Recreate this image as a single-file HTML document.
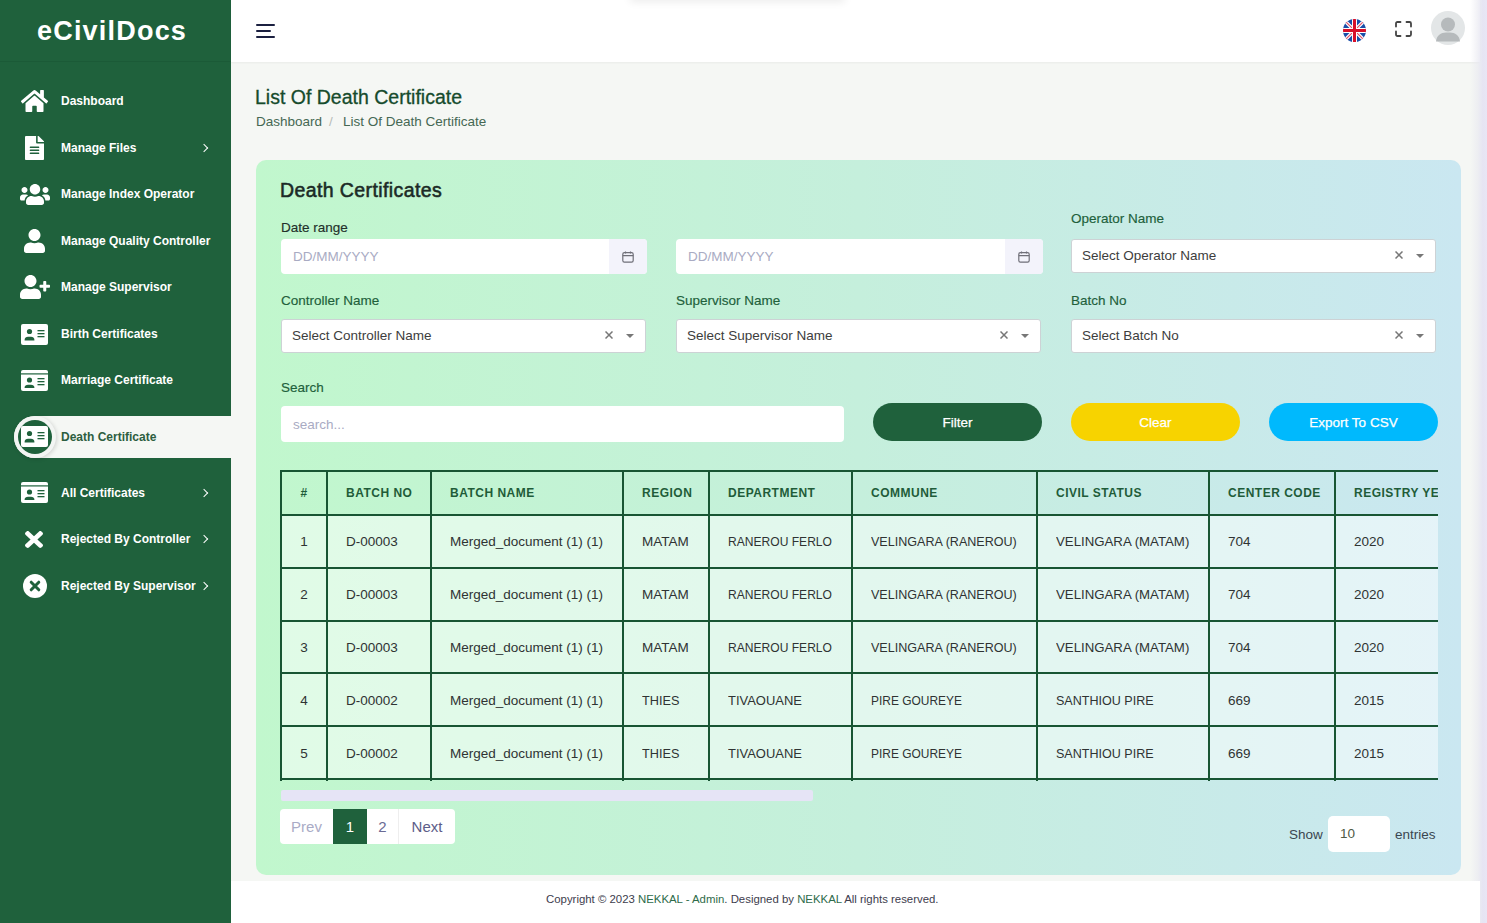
<!DOCTYPE html>
<html><head><meta charset="utf-8">
<style>
*{box-sizing:border-box;margin:0;padding:0}
html,body{width:1487px;height:923px;overflow:hidden;font-family:"Liberation Sans",sans-serif;background:#f5f7f4}
.sb{position:absolute;left:0;top:0;width:231px;height:923px;background:#1f613c}
.logo{position:absolute;left:0;top:0;width:231px;height:62px;border-bottom:1px solid #1b5a37;color:#fff;font-weight:bold;font-size:27px;letter-spacing:1.2px;text-align:left;padding-left:37px;line-height:62px}
.mi{position:absolute;left:0;width:231px;height:40px;color:#fff;font-size:13px;font-weight:bold}
.mi .ic{position:absolute;left:20px;top:0;width:30px;height:40px}
.mi .tx{position:absolute;left:61px;top:0;line-height:40px}
.mi .ar{position:absolute;left:201px;top:0;line-height:40px;font-size:13px}
.ico{position:absolute;display:block}
.mt{position:absolute;left:61px;height:40px;line-height:40px;color:#fff;font-size:12px;font-weight:bold;white-space:nowrap}
.mt.act{color:#2d5e40}
.chev{position:absolute;left:201px;margin-top:1px;width:6px;height:6px;border-right:1.6px solid #fff;border-top:1.6px solid #fff;transform:rotate(45deg)}
.active{position:absolute;left:14px;top:416px;width:217px;height:42px;background:#f5f7f4;border-radius:21px 0 0 21px}
.acirc{position:absolute;left:14px;top:416px;width:42px;height:42px;border-radius:50%;background:#f3f5f3;box-shadow:1px 1px 4px rgba(0,0,0,.15)}
.acirc:after{content:"";position:absolute;left:4px;top:4px;width:34px;height:34px;border-radius:50%;background:#1f613c}
.hb{position:absolute;left:25px;height:2px;background:#1b2040;border-radius:1px}
.lbl{position:absolute;font-size:13.5px;color:#21603b;white-space:nowrap;-webkit-text-stroke:.15px currentColor}
.inp{position:absolute;height:35px;background:#fff;border-radius:4px}
.ph{position:absolute;left:12px;top:0;line-height:35px;font-size:13.5px;color:#a9abc3;white-space:nowrap}
.addon{position:absolute;right:0;top:0;width:38px;height:35px;background:#f3f3fb;border-radius:0 4px 4px 0}
.sel{position:absolute;height:34px;background:#fff;border:1px solid #cdd2d5;border-radius:3px}
.sel .v{position:absolute;left:10px;top:0;line-height:32px;font-size:13.5px;color:#3d3d3d;white-space:nowrap}
.sel .x{position:absolute;right:32px;top:11px;width:8px;height:8px}
.sel .dd{position:absolute;right:11px;top:14px;width:0;height:0;border-left:4.5px solid transparent;border-right:4.5px solid transparent;border-top:4.5px solid #777}
.btn{position:absolute;top:403px;width:169px;height:38px;border-radius:19px;color:#fff;font-size:13.5px;text-align:center;line-height:39px;-webkit-text-stroke:.25px #fff}
.tbl{position:absolute;left:280px;top:470px;width:1158px;height:311px;overflow:hidden}
.rowbg{position:absolute;left:0;width:1158px;background:rgba(255,255,255,.5)}
.vl{position:absolute;top:0;width:2px;height:311px;background:#185533}
.hl{position:absolute;left:0;width:1300px;height:2px;background:#185533}
.th{position:absolute;top:2px;line-height:43px;font-size:12px;font-weight:bold;letter-spacing:.5px;color:#1f5c39;white-space:nowrap}
.td{position:absolute;line-height:53px;font-size:13.5px;color:#2f3333;white-space:nowrap}
.sbar{position:absolute;left:281px;top:790px;width:532px;height:10.5px;background:#e6e4f6;border-radius:2px}
.pag{position:absolute;left:280px;top:809px;width:175px;height:35px;background:#fff;border-radius:4px;overflow:hidden}
.pg{position:absolute;top:0;height:35px;line-height:35px;text-align:center;font-size:15px}
.pg.act{background:#1f613c;color:#fff}
.shw{position:absolute;top:827px;font-size:13.5px;color:#3a4650;white-space:nowrap}
.hdr{position:absolute;left:231px;top:0;width:1249px;height:62px;background:#fff;box-shadow:0 1px 2px rgba(0,0,0,.05)}
.rstrip{position:absolute;left:1470px;top:0;width:17px;height:923px;background:linear-gradient(90deg,rgba(235,235,245,0) 0%,rgba(232,232,240,.6) 45%,#e6e5f3 75%,#e8e6f5 100%)}
.tsh{position:absolute;left:630px;top:-10px;width:215px;height:10px;box-shadow:0 2px 8px rgba(0,0,0,.08)}
.title{position:absolute;left:255px;top:86px;font-size:19.5px;color:#164b2c;white-space:nowrap;-webkit-text-stroke:.3px #164b2c}
.bc{position:absolute;top:114px;font-size:13.5px;color:#456853;white-space:nowrap}
.h2{position:absolute;left:280px;top:178.5px;font-size:19.5px;letter-spacing:.4px;color:#1b2a26;white-space:nowrap;-webkit-text-stroke:.55px #1b2a26}
.card{position:absolute;left:256px;top:160px;width:1205px;height:715px;border-radius:10px;background:linear-gradient(90deg,#c1f7cd 0%,#c5efdc 50%,#cae7f1 100%)}
.ft{position:absolute;left:231px;top:881px;width:1249px;height:42px;background:#fff}
.ftt{position:absolute;left:546px;top:893px;font-size:11.4px;color:#3d3d4d;white-space:nowrap}
.ftt span{color:#2e6b4a}
</style></head><body>
<div class="sb">
  <div class="logo">eCivilDocs</div>
  <svg class="ico" style="left:21px;top:90px;width:27px;height:22px" viewBox="0 0 576 480" preserveAspectRatio="none"><path fill="#fff" d="M280.37 148.26L96 300.11V464a16 16 0 0 0 16 16l112.06-.29a16 16 0 0 0 15.92-16V368a16 16 0 0 1 16-16h64a16 16 0 0 1 16 16v95.64a16 16 0 0 0 16 16.050L464 480a16 16 0 0 0 16-16V300L295.670 148.26a12.19 12.19 0 0 0-15.3 0zM571.6 251.47L488 182.56V44.05a12 12 0 0 0-12-12h-56a12 12 0 0 0-12 12v72.61L318.47 43a48 48 0 0 0-61 0L4.34 251.47a12 12 0 0 0-1.6 16.9l25.5 31A12 12 0 0 0 45.15 301l235.22-193.74a12.19 12.19 0 0 1 15.3 0L530.9 301a12 12 0 0 0 16.9-1.6l25.5-31a12 12 0 0 0-1.7-16.93z" transform="translate(0,-32) scale(1,1.0667)"/></svg>
  <div class="mt" style="top:81px">Dashboard</div>

  <svg class="ico" style="left:25px;top:136px;width:19px;height:24px" viewBox="0 0 384 512" preserveAspectRatio="none"><path fill="#fff" d="M224 136V0H24C10.7 0 0 10.7 0 24v464c0 13.3 10.7 24 24 24h336c13.3 0 24-10.7 24-24V160H248c-13.2 0-24-10.8-24-24zm64 236c0 6.6-5.4 12-12 12H108c-6.6 0-12-5.4-12-12v-8c0-6.6 5.4-12 12-12h168c6.6 0 12 5.4 12 12v8zm0-64c0 6.6-5.4 12-12 12H108c-6.6 0-12-5.4-12-12v-8c0-6.6 5.4-12 12-12h168c6.6 0 12 5.4 12 12v8zm0-72v8c0 6.6-5.4 12-12 12H108c-6.6 0-12-5.4-12-12v-8c0-6.6 5.4-12 12-12h168c6.6 0 12 5.4 12 12zm96-114.1v6.1H256V0h6.1c6.4 0 12.5 2.5 17 7l97.9 98c4.5 4.5 7 10.6 7 16.9z"/></svg>
  <div class="mt" style="top:127.5px">Manage Files</div>
  <div class="chev" style="top:144px"></div>

  <svg class="ico" style="left:20px;top:184px;width:30px;height:21px" viewBox="0 32 640 448" preserveAspectRatio="none"><path fill="#fff" d="M96 224c35.3 0 64-28.7 64-64s-28.7-64-64-64-64 28.7-64 64 28.7 64 64 64zm448 0c35.3 0 64-28.700 64-64s-28.7-64-64-64-64 28.7-64 64 28.7 64 64 64zm32 32h-64c-17.6 0-33.5 7.1-45.1 18.6 40.3 22.1 68.9 62 75.1 109.4h66c17.7 0 32-14.3 32-32v-32c0-35.3-28.7-64-64-64zm-256 0c61.9 0 112-50.1 112-112S381.9 32 320 32 208 82.1 208 144s50.1 112 112 112zm76.8 32h-8.3c-20.8 10-43.9 16-68.5 16s-47.6-6-68.5-16h-8.3C179.6 288 128 339.6 128 403.2V432c0 26.5 21.5 48 48 48h288c26.5 0 48-21.5 48-48v-28.8c0-63.6-51.6-115.2-115.2-115.2zm-223.7-13.4C161.5 263.1 145.6 256 128 256H64c-35.3 0-64 28.7-64 64v32c0 17.7 14.3 32 32 32h65.9c6.3-47.4 34.9-87.3 75.2-109.4z"/></svg>
  <div class="mt" style="top:174px">Manage Index Operator</div>

  <svg class="ico" style="left:24px;top:229px;width:21px;height:24px" viewBox="0 0 448 512" preserveAspectRatio="none"><path fill="#fff" d="M224 256c70.7 0 128-57.3 128-128S294.7 0 224 0 96 57.3 96 128s57.3 128 128 128zm89.6 32h-16.7c-22.2 10.2-46.9 16-72.9 16s-50.6-5.8-72.9-16h-16.7C60.2 288 0 348.2 0 422.4V464c0 26.5 21.5 48 48 48h352c26.5 0 48-21.5 48-48v-41.6c0-74.2-60.2-134.4-134.4-134.4z"/></svg>
  <div class="mt" style="top:220.5px">Manage Quality Controller</div>

  <svg class="ico" style="left:20px;top:275px;width:30px;height:24px" viewBox="0 0 640 512" preserveAspectRatio="none"><path fill="#fff" d="M624 208h-64v-64c0-8.8-7.2-16-16-16h-32c-8.8 0-16 7.2-16 16v64h-64c-8.8 0-16 7.2-16 16v32c0 8.8 7.2 16 16 16h64v64c0 8.8 7.2 16 16 16h32c8.8 0 16-7.2 16-16v-64h64c8.8 0 16-7.2 16-16v-32c0-8.8-7.2-16-16-16zm-400 48c70.7 0 128-57.3 128-128S294.7 0 224 0 96 57.3 96 128s57.3 128 128 128zm89.6 32h-16.7c-22.2 10.2-46.9 16-72.9 16s-50.6-5.8-72.9-16h-16.7C60.2 288 0 348.2 0 422.4V464c0 26.5 21.5 48 48 48h352c26.5 0 48-21.5 48-48v-41.6c0-74.2-60.2-134.4-134.4-134.4z"/></svg>
  <div class="mt" style="top:267px">Manage Supervisor</div>

  <svg class="ico" style="left:21px;top:324px;width:27px;height:21px" viewBox="0 0 27 21"><rect x="0" y="0" width="27" height="21" rx="2" fill="#fff"/><circle cx="8.5" cy="7.5" r="2.6" fill="#1f613c"/><path d="M3.6 15.8c0-2 1.6-3 3.4-3h3c1.8 0 3.4 1 3.4 3v0.6H3.6z" fill="#1f613c"/><rect x="16.5" y="6" width="7" height="1.3" fill="#1f613c"/><rect x="16.5" y="9" width="7" height="1.3" fill="#1f613c"/><rect x="16.5" y="12" width="7" height="1.3" fill="#1f613c"/></svg>
  <div class="mt" style="top:313.5px">Birth Certificates</div>

  <svg class="ico" style="left:21px;top:370px;width:27px;height:21px" viewBox="0 0 27 21"><rect x="0" y="0" width="27" height="21" rx="2" fill="#fff"/><rect x="0" y="3.3" width="27" height="1.2" fill="#1f613c"/><circle cx="8.5" cy="10" r="2.6" fill="#1f613c"/><path d="M3.6 17.5c0-1.8 1.6-2.7 3.4-2.7h3c1.8 0 3.4 0.9 3.4 2.7v0.5H3.6z" fill="#1f613c"/><rect x="16.5" y="8" width="7" height="1.3" fill="#1f613c"/><rect x="16.5" y="11" width="7" height="1.3" fill="#1f613c"/><rect x="16.5" y="14" width="7" height="1.3" fill="#1f613c"/></svg>
  <div class="mt" style="top:360px">Marriage Certificate</div>

  <div class="active"></div>
  <div class="acirc"></div>
  <svg class="ico" style="left:21px;top:426px;width:27px;height:21px" viewBox="0 0 27 21"><rect x="0" y="0" width="27" height="21" rx="2" fill="#fff"/><circle cx="8.5" cy="7.5" r="2.6" fill="#1f613c"/><path d="M3.6 15.8c0-2 1.6-3 3.4-3h3c1.8 0 3.4 1 3.4 3v0.6H3.6z" fill="#1f613c"/><rect x="16.5" y="6" width="7" height="1.3" fill="#1f613c"/><rect x="16.5" y="9" width="7" height="1.3" fill="#1f613c"/><rect x="16.5" y="12" width="7" height="1.3" fill="#1f613c"/></svg>
  <div class="mt act" style="top:417px">Death Certificate</div>

  <svg class="ico" style="left:21px;top:482px;width:27px;height:21px" viewBox="0 0 27 21"><rect x="0" y="0" width="27" height="21" rx="2" fill="#fff"/><rect x="0" y="3.3" width="27" height="1.2" fill="#1f613c"/><circle cx="8.5" cy="10" r="2.6" fill="#1f613c"/><path d="M3.6 17.5c0-1.8 1.6-2.7 3.4-2.7h3c1.8 0 3.4 0.9 3.4 2.7v0.5H3.6z" fill="#1f613c"/><rect x="16.5" y="8" width="7" height="1.3" fill="#1f613c"/><rect x="16.5" y="11" width="7" height="1.3" fill="#1f613c"/><rect x="16.5" y="14" width="7" height="1.3" fill="#1f613c"/></svg>
  <div class="mt" style="top:473px">All Certificates</div>
  <div class="chev" style="top:489px"></div>

  <svg class="ico" style="left:25px;top:531px;width:18px;height:17px" viewBox="0 80 352 352" preserveAspectRatio="none"><path fill="#fff" d="M242.72 256l100.07-100.07c12.28-12.28 12.28-32.19 0-44.48l-22.24-22.24c-12.28-12.28-32.19-12.28-44.48 0L176 189.28 75.93 89.21c-12.280-12.28-32.19-12.28-44.48 0L9.21 111.45c-12.28 12.28-12.28 32.19 0 44.48L109.28 256 9.21 356.07c-12.28 12.28-12.28 32.19 0 44.48l22.24 22.24c12.28 12.28 32.2 12.28 44.48 0L176 322.72l100.07 100.07c12.28 12.28 32.2 12.28 44.48 0l22.24-22.24c12.28-12.28 12.28-32.19 0-44.48L242.72 256z"/></svg>
  <div class="mt" style="top:519px">Rejected By Controller</div>
  <div class="chev" style="top:535px"></div>

  <svg class="ico" style="left:23px;top:574px;width:24px;height:24px" viewBox="0 0 24 24"><circle cx="12" cy="12" r="12" fill="#fff"/><path d="M8.2 8.2L15.8 15.8M15.8 8.2L8.2 15.8" stroke="#1f613c" stroke-width="3" stroke-linecap="round"/></svg>
  <div class="mt" style="top:565.5px">Rejected By Supervisor</div>
  <div class="chev" style="top:582px"></div>
</div>

<div class="hdr">
  <div class="hb" style="top:24px;width:19px"></div>
  <div class="hb" style="top:30px;width:14.5px"></div>
  <div class="hb" style="top:36px;width:19px"></div>
  <svg style="position:absolute;left:1112px;top:19px;width:23px;height:23px" viewBox="0 0 60 60">
    <defs><clipPath id="fc"><circle cx="30" cy="30" r="30"/></clipPath></defs>
    <g clip-path="url(#fc)">
      <rect width="60" height="60" fill="#1a4ea8"/>
      <path d="M0 0L60 60M60 0L0 60" stroke="#fff" stroke-width="9"/>
      <path d="M0 0L60 60M60 0L0 60" stroke="#e0506a" stroke-width="3"/>
      <path d="M30 0V60M0 30H60" stroke="#fff" stroke-width="13"/>
      <path d="M30 0V60M0 30H60" stroke="#d8102a" stroke-width="8"/>
    </g>
  </svg>
  <svg style="position:absolute;left:1164px;top:21px;width:17px;height:16px" viewBox="0 0 17 16" fill="none" stroke="#444" stroke-width="1.8" stroke-linecap="round"><path d="M1 5.5V2.5Q1 1 2.5 1H5.5M11.5 1H14.5Q16 1 16 2.5V5.5M16 10.5V13.5Q16 15 14.5 15H11.5M5.5 15H2.5Q1 15 1 13.5V10.5"/></svg>
  <svg style="position:absolute;left:1200px;top:11px;width:34px;height:34px" viewBox="0 0 34 34"><circle cx="17" cy="17" r="17" fill="#e3e6e7"/><circle cx="17" cy="13.5" r="7" fill="#b6babc"/><path d="M5 30.5C5.5 24.5 10 21.5 15 21.5H19C24 21.5 28.5 24.5 29 30.5Z" fill="#b6babc"/></svg>
</div>
<div class="rstrip"></div><div class="tsh"></div>
<div class="title">List Of Death Certificate</div>
<div class="bc" style="left:256px">Dashboard</div><div class="bc" style="left:329px;color:#b8bcb8">/</div><div class="bc" style="left:343px">List Of Death Certificate</div>
<div class="card"></div>
<div class="h2">Death Certificates</div>
<div class="lbl" style="left:281px;top:220px;color:#22302a">Date range</div>
<div class="inp" style="left:281px;top:239px;width:366px"><div class="ph">DD/MM/YYYY</div><div class="addon"><svg style="position:absolute;left:13px;top:12px;width:12px;height:12px" viewBox="0 0 12 12" fill="none" stroke="#6f6f78" stroke-width="1.2"><rect x="0.8" y="1.6" width="10.4" height="9.6" rx="1.6"/><path d="M0.8 4.6H11.2M3.5 0.5V2.5M8.5 0.5V2.5"/></svg></div></div>
<div class="inp" style="left:676px;top:239px;width:367px"><div class="ph">DD/MM/YYYY</div><div class="addon"><svg style="position:absolute;left:13px;top:12px;width:12px;height:12px" viewBox="0 0 12 12" fill="none" stroke="#6f6f78" stroke-width="1.2"><rect x="0.8" y="1.6" width="10.4" height="9.6" rx="1.6"/><path d="M0.8 4.6H11.2M3.5 0.5V2.5M8.5 0.5V2.5"/></svg></div></div>
<div class="lbl" style="left:1071px;top:211px">Operator Name</div>
<div class="sel" style="left:1071px;top:239px;width:365px"><div class="v">Select Operator Name</div><svg class="x" viewBox="0 0 8 8"><path d="M0.5 0.5L7.5 7.5M7.5 0.5L0.5 7.5" stroke="#777" stroke-width="1.5"/></svg><div class="dd"></div></div>
<div class="lbl" style="left:281px;top:293px">Controller Name</div>
<div class="sel" style="left:281px;top:319px;width:365px"><div class="v">Select Controller Name</div><svg class="x" viewBox="0 0 8 8"><path d="M0.5 0.5L7.5 7.5M7.5 0.5L0.5 7.5" stroke="#777" stroke-width="1.5"/></svg><div class="dd"></div></div>
<div class="lbl" style="left:676px;top:293px">Supervisor Name</div>
<div class="sel" style="left:676px;top:319px;width:365px"><div class="v">Select Supervisor Name</div><svg class="x" viewBox="0 0 8 8"><path d="M0.5 0.5L7.5 7.5M7.5 0.5L0.5 7.5" stroke="#777" stroke-width="1.5"/></svg><div class="dd"></div></div>
<div class="lbl" style="left:1071px;top:293px">Batch No</div>
<div class="sel" style="left:1071px;top:319px;width:365px"><div class="v">Select Batch No</div><svg class="x" viewBox="0 0 8 8"><path d="M0.5 0.5L7.5 7.5M7.5 0.5L0.5 7.5" stroke="#777" stroke-width="1.5"/></svg><div class="dd"></div></div>
<div class="lbl" style="left:281px;top:380px">Search</div>
<div class="inp" style="left:281px;top:406px;width:563px;height:36px"><div class="ph" style="line-height:37px">search...</div></div>
<div class="btn" style="left:873px;background:#1f613c">Filter</div>
<div class="btn" style="left:1071px;background:#f7d300">Clear</div>
<div class="btn" style="left:1269px;background:#00b9fd">Export To CSV</div>

<div class="tbl">
<div class="rowbg" style="top:45px;height:264px"></div>
<div class="th" style="left:1px;width:46px;text-align:center">#</div>
<div class="th" style="left:66px">BATCH NO</div>
<div class="th" style="left:170px">BATCH NAME</div>
<div class="th" style="left:362px">REGION</div>
<div class="th" style="left:448px">DEPARTMENT</div>
<div class="th" style="left:591px">COMMUNE</div>
<div class="th" style="left:776px">CIVIL STATUS</div>
<div class="th" style="left:948px">CENTER CODE</div>
<div class="th" style="left:1074px">REGISTRY YEAR</div>
<div class="td" style="top:45px;left:1px;width:46px;text-align:center">1</div>
<div class="td" style="top:45px;left:66px">D-00003</div>
<div class="td" style="top:45px;left:170px">Merged_document (1) (1)</div>
<div class="td" style="top:45px;left:362px">MATAM</div>
<div class="td" style="top:45px;left:448px;transform:scaleX(0.894);transform-origin:0 0">RANEROU FERLO</div>
<div class="td" style="top:45px;left:591px;transform:scaleX(0.93);transform-origin:0 0">VELINGARA (RANEROU)</div>
<div class="td" style="top:45px;left:776px;transform:scaleX(0.98);transform-origin:0 0">VELINGARA (MATAM)</div>
<div class="td" style="top:45px;left:948px">704</div>
<div class="td" style="top:45px;left:1074px">2020</div>
<div class="td" style="top:98px;left:1px;width:46px;text-align:center">2</div>
<div class="td" style="top:98px;left:66px">D-00003</div>
<div class="td" style="top:98px;left:170px">Merged_document (1) (1)</div>
<div class="td" style="top:98px;left:362px">MATAM</div>
<div class="td" style="top:98px;left:448px;transform:scaleX(0.894);transform-origin:0 0">RANEROU FERLO</div>
<div class="td" style="top:98px;left:591px;transform:scaleX(0.93);transform-origin:0 0">VELINGARA (RANEROU)</div>
<div class="td" style="top:98px;left:776px;transform:scaleX(0.98);transform-origin:0 0">VELINGARA (MATAM)</div>
<div class="td" style="top:98px;left:948px">704</div>
<div class="td" style="top:98px;left:1074px">2020</div>
<div class="td" style="top:151px;left:1px;width:46px;text-align:center">3</div>
<div class="td" style="top:151px;left:66px">D-00003</div>
<div class="td" style="top:151px;left:170px">Merged_document (1) (1)</div>
<div class="td" style="top:151px;left:362px">MATAM</div>
<div class="td" style="top:151px;left:448px;transform:scaleX(0.894);transform-origin:0 0">RANEROU FERLO</div>
<div class="td" style="top:151px;left:591px;transform:scaleX(0.93);transform-origin:0 0">VELINGARA (RANEROU)</div>
<div class="td" style="top:151px;left:776px;transform:scaleX(0.98);transform-origin:0 0">VELINGARA (MATAM)</div>
<div class="td" style="top:151px;left:948px">704</div>
<div class="td" style="top:151px;left:1074px">2020</div>
<div class="td" style="top:204px;left:1px;width:46px;text-align:center">4</div>
<div class="td" style="top:204px;left:66px">D-00002</div>
<div class="td" style="top:204px;left:170px">Merged_document (1) (1)</div>
<div class="td" style="top:204px;left:362px;transform:scaleX(0.94);transform-origin:0 0">THIES</div>
<div class="td" style="top:204px;left:448px;transform:scaleX(0.96);transform-origin:0 0">TIVAOUANE</div>
<div class="td" style="top:204px;left:591px;transform:scaleX(0.885);transform-origin:0 0">PIRE GOUREYE</div>
<div class="td" style="top:204px;left:776px;transform:scaleX(0.93);transform-origin:0 0">SANTHIOU PIRE</div>
<div class="td" style="top:204px;left:948px">669</div>
<div class="td" style="top:204px;left:1074px">2015</div>
<div class="td" style="top:257px;left:1px;width:46px;text-align:center">5</div>
<div class="td" style="top:257px;left:66px">D-00002</div>
<div class="td" style="top:257px;left:170px">Merged_document (1) (1)</div>
<div class="td" style="top:257px;left:362px;transform:scaleX(0.94);transform-origin:0 0">THIES</div>
<div class="td" style="top:257px;left:448px;transform:scaleX(0.96);transform-origin:0 0">TIVAOUANE</div>
<div class="td" style="top:257px;left:591px;transform:scaleX(0.885);transform-origin:0 0">PIRE GOUREYE</div>
<div class="td" style="top:257px;left:776px;transform:scaleX(0.93);transform-origin:0 0">SANTHIOU PIRE</div>
<div class="td" style="top:257px;left:948px">669</div>
<div class="td" style="top:257px;left:1074px">2015</div>
<div class="vl" style="left:0px"></div>
<div class="vl" style="left:46px"></div>
<div class="vl" style="left:150px"></div>
<div class="vl" style="left:342px"></div>
<div class="vl" style="left:428px"></div>
<div class="vl" style="left:571px"></div>
<div class="vl" style="left:756px"></div>
<div class="vl" style="left:928px"></div>
<div class="vl" style="left:1054px"></div>
<div class="hl" style="top:0px"></div>
<div class="hl" style="top:44px"></div>
<div class="hl" style="top:97px"></div>
<div class="hl" style="top:150px"></div>
<div class="hl" style="top:202px"></div>
<div class="hl" style="top:255px"></div>
<div class="hl" style="top:308px"></div>
</div>
<div class="sbar"></div>
<div class="pag"><div class="pg" style="left:0;width:53px;color:#a9abc6">Prev</div><div class="pg act" style="left:53px;width:34px">1</div><div class="pg" style="left:87px;width:31px;color:#6a6a94">2</div><div class="pg" style="left:118px;width:57px;color:#5d5d88;border-left:1px solid #eee">Next</div></div>
<div class="shw" style="left:1289px">Show</div>
<div class="inp" style="left:1328px;top:816px;width:62px;height:36px;border-radius:5px"><div class="ph" style="line-height:36px;color:#4f5a45">10</div></div>
<div class="shw" style="left:1395px">entries</div>
<div class="ft"></div><div class="ftt">Copyright © 2023 <span>NEKKAL - Admin</span>. Designed by <span>NEKKAL</span> All rights reserved.</div>
</body></html>
